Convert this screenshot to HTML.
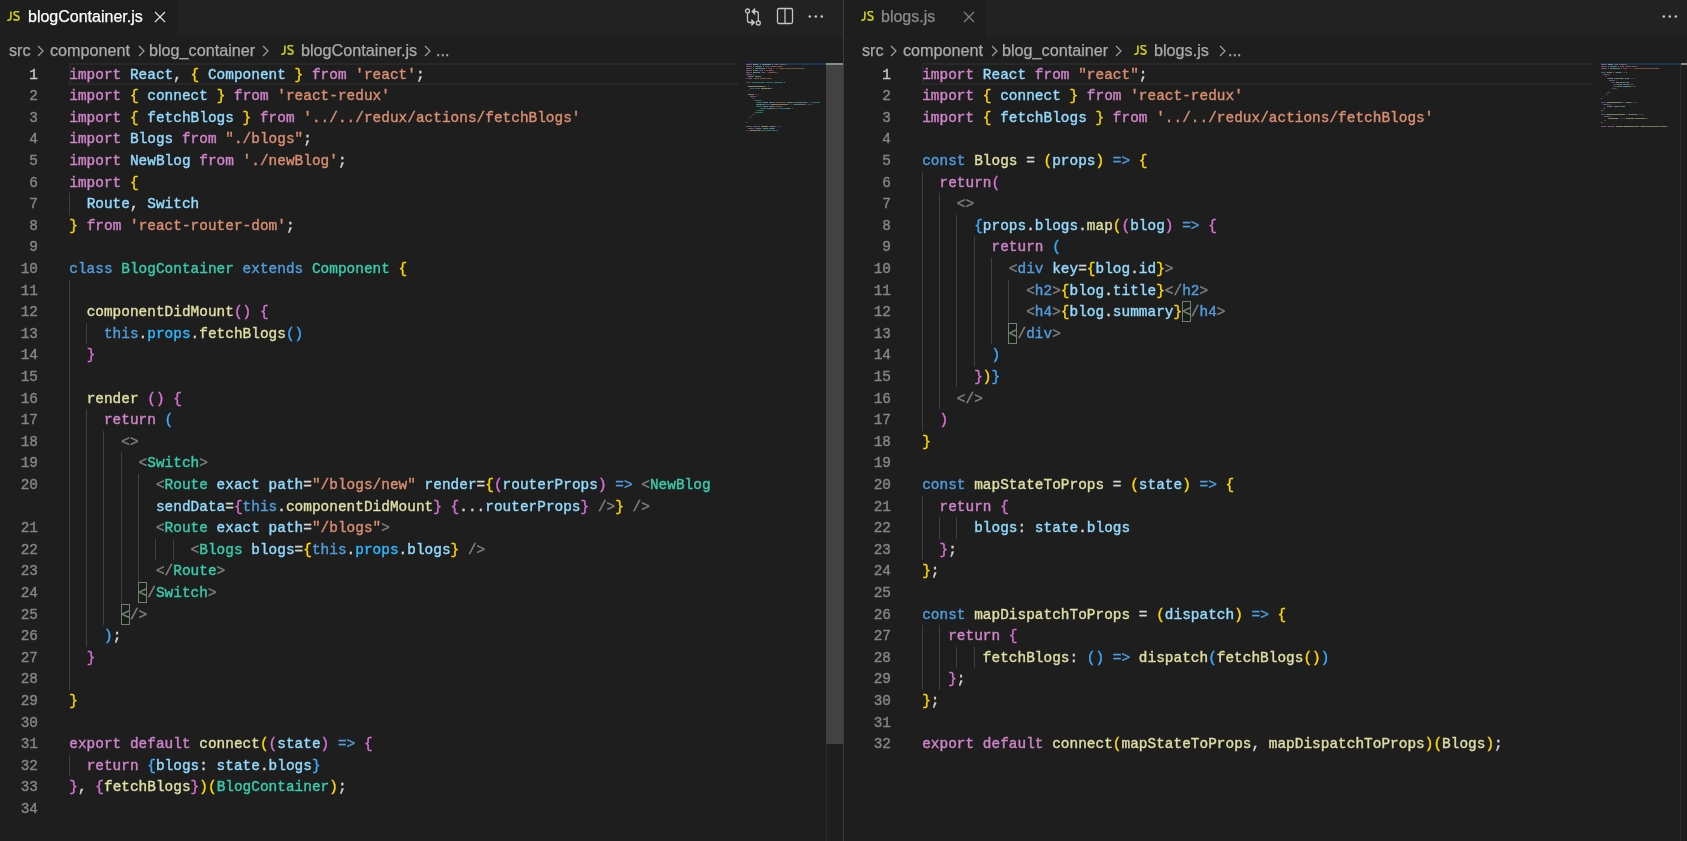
<!DOCTYPE html>
<html><head><meta charset="utf-8">
<style>
html,body{margin:0;padding:0;background:#1e1e1e;width:1687px;height:841px;overflow:hidden;position:relative}
*{box-sizing:border-box}
.pane{position:absolute;top:0;height:841px;background:#1e1e1e;overflow:hidden;will-change:transform}
.tabbar{position:absolute;left:0;top:0;right:0;height:37px;background:#222222}
.tab{position:absolute;top:0;height:37px;background:#1e1e1e}
.tabtxt{position:absolute;top:7px;font:16px "Liberation Sans",sans-serif;white-space:pre;line-height:20px;-webkit-text-stroke:0.25px}
.js{position:absolute;font:bold 12px "Liberation Sans",sans-serif;color:#cbcb41;letter-spacing:-1.3px;line-height:13px}
.crumb{position:absolute;top:40px;font:16.2px "Liberation Sans",sans-serif;color:#ababab;white-space:pre;line-height:20px;-webkit-text-stroke:0.25px}
.code{position:absolute;font:14.4px "Liberation Mono",monospace;-webkit-text-stroke:0.4px;letter-spacing:0.028px}
.ln{position:absolute;left:0;white-space:pre;height:21.6px;line-height:22.2px;color:#d4d4d4}
.num{position:absolute;right:0;width:40px;text-align:right;font:14.4px "Liberation Mono",monospace;line-height:22.4px;color:#858585}
.num.cur{color:#c6c6c6}
.gd{position:absolute;width:1px;background:#404040}
.bx{position:absolute;width:9px;height:21px;border:1px solid #7a7a7a;background:#142014}
.curline{position:absolute;height:21.6px;border:2px solid #282828;border-right:none}
.ck{color:#D084CA}.cb{color:#4F9DDD}.cv{color:#92DBFF}.cc{color:#2DB9FF}.ct{color:#38CCAC}.cr{color:#D98E70}.cf{color:#DFDFA4}.cg{color:#808080}.c1{color:#FFD700}.c2{color:#DA70D6}.c3{color:#3AACFF}.cp{color:#D4D4D4}
.chev{position:absolute;top:45px}
.mm{position:absolute;left:0;top:0;font:1.667px "Liberation Mono",monospace;color:#d4d4d4;opacity:.6;-webkit-text-stroke:0.2px;top:0.5px}
</style></head><body>

<!-- LEFT PANE -->
<div class="pane" style="left:0;width:843px">
  <div class="tabbar"></div>
  <div class="tab" style="left:0;width:177px"></div>
  <svg class="jsi" style="position:absolute;left:7.0px;top:11px" width="14" height="11" viewBox="0 0 14 11" fill="none" stroke="#c9c910" stroke-width="1.7" stroke-linecap="butt"><path d="M3.9 0.5V6.3Q3.9 9.2 1.6 9.2Q0.8 9.2 0.3 8.8"/><path d="M11.9 1.3Q11.1 0.5 9.5 0.5Q7 0.5 7 2.5Q7 3.9 9.3 4.6Q12 5.4 12 7Q12 9.2 9.4 9.2Q7.6 9.2 6.5 8.2"/></svg>
  <div class="tabtxt" style="left:28px;color:#ffffff">blogContainer.js</div>
  <svg style="position:absolute;left:154px;top:11px" width="12" height="12" viewBox="0 0 12 12"><path d="M1 1L11 11M11 1L1 11" stroke="#e0e0e0" stroke-width="1.2"/></svg>
  <!-- actions -->
  <svg style="position:absolute;left:744px;top:7px" width="19" height="19" viewBox="0 0 19 19" fill="none" stroke="#c5c5c5" stroke-width="1.3">
    <circle cx="3.5" cy="4" r="2"/><path d="M3.5 6V13.5a2 2 0 0 0 2 2H9"/><path d="M8 13.2L10.3 15.5L8 17.8Z" fill="#c5c5c5"/>
    <circle cx="14.3" cy="16" r="2"/><path d="M14.3 14V6.5a2 2 0 0 0-2-2H9.5"/><path d="M10.5 2.2L8.2 4.5L10.5 6.8Z" fill="#c5c5c5"/>
  </svg>
  <svg style="position:absolute;left:776px;top:7px" width="18" height="18" viewBox="0 0 18 18" fill="none" stroke="#c5c5c5" stroke-width="1.3">
    <rect x="1.5" y="1.5" width="15" height="15" rx="1.5"/><path d="M9 1.5V16.5"/>
  </svg>
  <svg style="position:absolute;left:806.5px;top:14px" width="18" height="6" viewBox="0 0 18 6" fill="#c5c5c5">
    <circle cx="2.8" cy="2.5" r="1.3"/><circle cx="8.8" cy="2.5" r="1.3"/><circle cx="14.8" cy="2.5" r="1.3"/>
  </svg>
  <!-- breadcrumbs -->
  <div class="crumb" style="left:9px">src</div>
  <svg class="chev" style="left:37px" width="7" height="12" viewBox="0 0 7 12"><path d="M1 1 L6 6 L1 11" fill="none" stroke="#a0a0a0" stroke-width="1.2"/></svg>
  <div class="crumb" style="left:50px">component</div>
  <svg class="chev" style="left:138px" width="7" height="12" viewBox="0 0 7 12"><path d="M1 1 L6 6 L1 11" fill="none" stroke="#a0a0a0" stroke-width="1.2"/></svg>
  <div class="crumb" style="left:149px">blog_container</div>
  <svg class="chev" style="left:262px" width="7" height="12" viewBox="0 0 7 12"><path d="M1 1 L6 6 L1 11" fill="none" stroke="#a0a0a0" stroke-width="1.2"/></svg>
  <svg class="jsi" style="position:absolute;left:281.0px;top:45px" width="14" height="11" viewBox="0 0 14 11" fill="none" stroke="#c9c910" stroke-width="1.7" stroke-linecap="butt"><path d="M3.9 0.5V6.3Q3.9 9.2 1.6 9.2Q0.8 9.2 0.3 8.8"/><path d="M11.9 1.3Q11.1 0.5 9.5 0.5Q7 0.5 7 2.5Q7 3.9 9.3 4.6Q12 5.4 12 7Q12 9.2 9.4 9.2Q7.6 9.2 6.5 8.2"/></svg>
  <div class="crumb" style="left:301px">blogContainer.js</div>
  <svg class="chev" style="left:424px" width="7" height="12" viewBox="0 0 7 12"><path d="M1 1 L6 6 L1 11" fill="none" stroke="#a0a0a0" stroke-width="1.2"/></svg>
  <div class="crumb" style="left:436px">...</div>

  <div class="curline" style="left:69px;top:63.0px;width:669px"></div>
  <div class="code" style="left:-2px;top:63.5px;width:40px;height:760px"><div class="num cur" style="top:0.00px">1</div>
<div class="num" style="top:21.60px">2</div>
<div class="num" style="top:43.20px">3</div>
<div class="num" style="top:64.80px">4</div>
<div class="num" style="top:86.40px">5</div>
<div class="num" style="top:108.00px">6</div>
<div class="num" style="top:129.60px">7</div>
<div class="num" style="top:151.20px">8</div>
<div class="num" style="top:172.80px">9</div>
<div class="num" style="top:194.40px">10</div>
<div class="num" style="top:216.00px">11</div>
<div class="num" style="top:237.60px">12</div>
<div class="num" style="top:259.20px">13</div>
<div class="num" style="top:280.80px">14</div>
<div class="num" style="top:302.40px">15</div>
<div class="num" style="top:324.00px">16</div>
<div class="num" style="top:345.60px">17</div>
<div class="num" style="top:367.20px">18</div>
<div class="num" style="top:388.80px">19</div>
<div class="num" style="top:410.40px">20</div>
<div class="num" style="top:453.60px">21</div>
<div class="num" style="top:475.20px">22</div>
<div class="num" style="top:496.80px">23</div>
<div class="num" style="top:518.40px">24</div>
<div class="num" style="top:540.00px">25</div>
<div class="num" style="top:561.60px">26</div>
<div class="num" style="top:583.20px">27</div>
<div class="num" style="top:604.80px">28</div>
<div class="num" style="top:626.40px">29</div>
<div class="num" style="top:648.00px">30</div>
<div class="num" style="top:669.60px">31</div>
<div class="num" style="top:691.20px">32</div>
<div class="num" style="top:712.80px">33</div>
<div class="num" style="top:734.40px">34</div></div>
  <div class="gd" style="left:69px;top:193.10px;height:21.60px"></div>
<div class="gd" style="left:69px;top:279.50px;height:410.40px"></div>
<div class="gd" style="left:86px;top:322.70px;height:21.60px"></div>
<div class="gd" style="left:86px;top:409.10px;height:237.60px"></div>
<div class="gd" style="left:103px;top:430.70px;height:194.40px"></div>
<div class="gd" style="left:121px;top:452.30px;height:151.20px"></div>
<div class="gd" style="left:138px;top:473.90px;height:108.00px"></div>
<div class="gd" style="left:155px;top:538.70px;height:21.60px"></div>
<div class="gd" style="left:173px;top:538.70px;height:21.60px"></div>
<div class="gd" style="left:69px;top:754.70px;height:21.60px"></div>
  <div class="bx" style="left:138px;top:581.90px"></div>
<div class="bx" style="left:121px;top:603.50px"></div>
  <div class="code" style="left:69.3px;top:63.5px;width:680px;height:780px">
  <div class="ln" style="top:0.00px"><span class="ck">import</span> <span class="cv">React</span>, <span class="c1">{</span> <span class="cv">Component</span> <span class="c1">}</span> <span class="ck">from</span> <span class="cr">&#x27;react&#x27;</span>;</div>
<div class="ln" style="top:21.60px"><span class="ck">import</span> <span class="c1">{</span> <span class="cv">connect</span> <span class="c1">}</span> <span class="ck">from</span> <span class="cr">&#x27;react-redux&#x27;</span></div>
<div class="ln" style="top:43.20px"><span class="ck">import</span> <span class="c1">{</span> <span class="cv">fetchBlogs</span> <span class="c1">}</span> <span class="ck">from</span> <span class="cr">&#x27;../../redux/actions/fetchBlogs&#x27;</span></div>
<div class="ln" style="top:64.80px"><span class="ck">import</span> <span class="cv">Blogs</span> <span class="ck">from</span> <span class="cr">&quot;./blogs&quot;</span>;</div>
<div class="ln" style="top:86.40px"><span class="ck">import</span> <span class="cv">NewBlog</span> <span class="ck">from</span> <span class="cr">&#x27;./newBlog&#x27;</span>;</div>
<div class="ln" style="top:108.00px"><span class="ck">import</span> <span class="c1">{</span></div>
<div class="ln" style="top:129.60px">  <span class="cv">Route</span>, <span class="cv">Switch</span></div>
<div class="ln" style="top:151.20px"><span class="c1">}</span> <span class="ck">from</span> <span class="cr">&#x27;react-router-dom&#x27;</span>;</div>
<div class="ln" style="top:172.80px"></div>
<div class="ln" style="top:194.40px"><span class="cb">class</span> <span class="ct">BlogContainer</span> <span class="cb">extends</span> <span class="ct">Component</span> <span class="c1">{</span></div>
<div class="ln" style="top:216.00px"></div>
<div class="ln" style="top:237.60px">  <span class="cf">componentDidMount</span><span class="c2">()</span> <span class="c2">{</span></div>
<div class="ln" style="top:259.20px">    <span class="cb">this</span>.<span class="cc">props</span>.<span class="cf">fetchBlogs</span><span class="c3">()</span></div>
<div class="ln" style="top:280.80px">  <span class="c2">}</span></div>
<div class="ln" style="top:302.40px"></div>
<div class="ln" style="top:324.00px">  <span class="cf">render</span> <span class="c2">()</span> <span class="c2">{</span></div>
<div class="ln" style="top:345.60px">    <span class="ck">return</span> <span class="c3">(</span></div>
<div class="ln" style="top:367.20px">      <span class="cg">&lt;&gt;</span></div>
<div class="ln" style="top:388.80px">        <span class="cg">&lt;</span><span class="ct">Switch</span><span class="cg">&gt;</span></div>
<div class="ln" style="top:410.40px">          <span class="cg">&lt;</span><span class="ct">Route</span> <span class="cv">exact</span> <span class="cv">path</span>=<span class="cr">&quot;/blogs/new&quot;</span> <span class="cv">render</span>=<span class="c1">{</span><span class="c2">(</span><span class="cv">routerProps</span><span class="c2">)</span> <span class="cb">=&gt;</span> <span class="cg">&lt;</span><span class="ct">NewBlog</span></div>
<div class="ln" style="top:432.00px">          <span class="cv">sendData</span>=<span class="c2">{</span><span class="cb">this</span>.<span class="cf">componentDidMount</span><span class="c2">}</span> <span class="c2">{</span>...<span class="cv">routerProps</span><span class="c2">}</span> <span class="cg">/&gt;</span><span class="c1">}</span> <span class="cg">/&gt;</span></div>
<div class="ln" style="top:453.60px">          <span class="cg">&lt;</span><span class="ct">Route</span> <span class="cv">exact</span> <span class="cv">path</span>=<span class="cr">&quot;/blogs&quot;</span><span class="cg">&gt;</span></div>
<div class="ln" style="top:475.20px">              <span class="cg">&lt;</span><span class="ct">Blogs</span> <span class="cv">blogs</span>=<span class="c1">{</span><span class="cb">this</span>.<span class="cc">props</span>.<span class="cv">blogs</span><span class="c1">}</span> <span class="cg">/&gt;</span></div>
<div class="ln" style="top:496.80px">          <span class="cg">&lt;/</span><span class="ct">Route</span><span class="cg">&gt;</span></div>
<div class="ln" style="top:518.40px">        <span class="cg">&lt;/</span><span class="ct">Switch</span><span class="cg">&gt;</span></div>
<div class="ln" style="top:540.00px">      <span class="cg">&lt;/&gt;</span></div>
<div class="ln" style="top:561.60px">    <span class="c3">)</span>;</div>
<div class="ln" style="top:583.20px">  <span class="c2">}</span></div>
<div class="ln" style="top:604.80px"></div>
<div class="ln" style="top:626.40px"><span class="c1">}</span></div>
<div class="ln" style="top:648.00px"></div>
<div class="ln" style="top:669.60px"><span class="ck">export</span> <span class="ck">default</span> <span class="cf">connect</span><span class="c1">(</span><span class="c2">(</span><span class="cv">state</span><span class="c2">)</span> <span class="cb">=&gt;</span> <span class="c2">{</span></div>
<div class="ln" style="top:691.20px">  <span class="ck">return</span> <span class="c3">{</span><span class="cv">blogs</span>: <span class="cv">state</span>.<span class="cv">blogs</span><span class="c3">}</span></div>
<div class="ln" style="top:712.80px"><span class="c2">}</span>, <span class="c2">{</span><span class="cf">fetchBlogs</span><span class="c2">}</span><span class="c1">)</span><span class="c1">(</span><span class="ct">BlogContainer</span><span class="c1">)</span>;</div>
<div class="ln" style="top:734.40px"></div>
  </div>
  <!-- minimap -->
  <div style="position:absolute;left:746px;top:63px;width:80px;height:2px;background:#1c3552"></div>
  <div style="position:absolute;left:746px;top:63px;width:80px;height:80px"><div class="mm"><div style="position:absolute;left:0;top:0px;height:2px;line-height:2px;white-space:pre"><span class="ck">import</span> <span class="cv">React</span>, <span class="c1">{</span> <span class="cv">Component</span> <span class="c1">}</span> <span class="ck">from</span> <span class="cr">&#x27;react&#x27;</span>;</div><div style="position:absolute;left:0;top:2px;height:2px;line-height:2px;white-space:pre"><span class="ck">import</span> <span class="c1">{</span> <span class="cv">connect</span> <span class="c1">}</span> <span class="ck">from</span> <span class="cr">&#x27;react-redux&#x27;</span></div><div style="position:absolute;left:0;top:4px;height:2px;line-height:2px;white-space:pre"><span class="ck">import</span> <span class="c1">{</span> <span class="cv">fetchBlogs</span> <span class="c1">}</span> <span class="ck">from</span> <span class="cr">&#x27;../../redux/actions/fetchBlogs&#x27;</span></div><div style="position:absolute;left:0;top:6px;height:2px;line-height:2px;white-space:pre"><span class="ck">import</span> <span class="cv">Blogs</span> <span class="ck">from</span> <span class="cr">&quot;./blogs&quot;</span>;</div><div style="position:absolute;left:0;top:8px;height:2px;line-height:2px;white-space:pre"><span class="ck">import</span> <span class="cv">NewBlog</span> <span class="ck">from</span> <span class="cr">&#x27;./newBlog&#x27;</span>;</div><div style="position:absolute;left:0;top:10px;height:2px;line-height:2px;white-space:pre"><span class="ck">import</span> <span class="c1">{</span></div><div style="position:absolute;left:0;top:12px;height:2px;line-height:2px;white-space:pre">  <span class="cv">Route</span>, <span class="cv">Switch</span></div><div style="position:absolute;left:0;top:14px;height:2px;line-height:2px;white-space:pre"><span class="c1">}</span> <span class="ck">from</span> <span class="cr">&#x27;react-router-dom&#x27;</span>;</div><div style="position:absolute;left:0;top:16px;height:2px;line-height:2px;white-space:pre"></div><div style="position:absolute;left:0;top:18px;height:2px;line-height:2px;white-space:pre"><span class="cb">class</span> <span class="ct">BlogContainer</span> <span class="cb">extends</span> <span class="ct">Component</span> <span class="c1">{</span></div><div style="position:absolute;left:0;top:20px;height:2px;line-height:2px;white-space:pre"></div><div style="position:absolute;left:0;top:22px;height:2px;line-height:2px;white-space:pre">  <span class="cf">componentDidMount</span><span class="c2">()</span> <span class="c2">{</span></div><div style="position:absolute;left:0;top:24px;height:2px;line-height:2px;white-space:pre">    <span class="cb">this</span>.<span class="cc">props</span>.<span class="cf">fetchBlogs</span><span class="c3">()</span></div><div style="position:absolute;left:0;top:26px;height:2px;line-height:2px;white-space:pre">  <span class="c2">}</span></div><div style="position:absolute;left:0;top:28px;height:2px;line-height:2px;white-space:pre"></div><div style="position:absolute;left:0;top:30px;height:2px;line-height:2px;white-space:pre">  <span class="cf">render</span> <span class="c2">()</span> <span class="c2">{</span></div><div style="position:absolute;left:0;top:32px;height:2px;line-height:2px;white-space:pre">    <span class="ck">return</span> <span class="c3">(</span></div><div style="position:absolute;left:0;top:34px;height:2px;line-height:2px;white-space:pre">      <span class="cg">&lt;&gt;</span></div><div style="position:absolute;left:0;top:36px;height:2px;line-height:2px;white-space:pre">        <span class="cg">&lt;</span><span class="ct">Switch</span><span class="cg">&gt;</span></div><div style="position:absolute;left:0;top:38px;height:2px;line-height:2px;white-space:pre">          <span class="cg">&lt;</span><span class="ct">Route</span> <span class="cv">exact</span> <span class="cv">path</span>=<span class="cr">&quot;/blogs/new&quot;</span> <span class="cv">render</span>=<span class="c1">{</span><span class="c2">(</span><span class="cv">routerProps</span><span class="c2">)</span> <span class="cb">=&gt;</span> <span class="cg">&lt;</span><span class="ct">NewBlog</span></div><div style="position:absolute;left:0;top:40px;height:2px;line-height:2px;white-space:pre">          <span class="cv">sendData</span>=<span class="c2">{</span><span class="cb">this</span>.<span class="cf">componentDidMount</span><span class="c2">}</span> <span class="c2">{</span>...<span class="cv">routerProps</span><span class="c2">}</span> <span class="cg">/&gt;</span><span class="c1">}</span> <span class="cg">/&gt;</span></div><div style="position:absolute;left:0;top:42px;height:2px;line-height:2px;white-space:pre">          <span class="cg">&lt;</span><span class="ct">Route</span> <span class="cv">exact</span> <span class="cv">path</span>=<span class="cr">&quot;/blogs&quot;</span><span class="cg">&gt;</span></div><div style="position:absolute;left:0;top:44px;height:2px;line-height:2px;white-space:pre">              <span class="cg">&lt;</span><span class="ct">Blogs</span> <span class="cv">blogs</span>=<span class="c1">{</span><span class="cb">this</span>.<span class="cc">props</span>.<span class="cv">blogs</span><span class="c1">}</span> <span class="cg">/&gt;</span></div><div style="position:absolute;left:0;top:46px;height:2px;line-height:2px;white-space:pre">          <span class="cg">&lt;/</span><span class="ct">Route</span><span class="cg">&gt;</span></div><div style="position:absolute;left:0;top:48px;height:2px;line-height:2px;white-space:pre">        <span class="cg">&lt;/</span><span class="ct">Switch</span><span class="cg">&gt;</span></div><div style="position:absolute;left:0;top:50px;height:2px;line-height:2px;white-space:pre">      <span class="cg">&lt;/&gt;</span></div><div style="position:absolute;left:0;top:52px;height:2px;line-height:2px;white-space:pre">    <span class="c3">)</span>;</div><div style="position:absolute;left:0;top:54px;height:2px;line-height:2px;white-space:pre">  <span class="c2">}</span></div><div style="position:absolute;left:0;top:56px;height:2px;line-height:2px;white-space:pre"></div><div style="position:absolute;left:0;top:58px;height:2px;line-height:2px;white-space:pre"><span class="c1">}</span></div><div style="position:absolute;left:0;top:60px;height:2px;line-height:2px;white-space:pre"></div><div style="position:absolute;left:0;top:62px;height:2px;line-height:2px;white-space:pre"><span class="ck">export</span> <span class="ck">default</span> <span class="cf">connect</span><span class="c1">(</span><span class="c2">(</span><span class="cv">state</span><span class="c2">)</span> <span class="cb">=&gt;</span> <span class="c2">{</span></div><div style="position:absolute;left:0;top:64px;height:2px;line-height:2px;white-space:pre">  <span class="ck">return</span> <span class="c3">{</span><span class="cv">blogs</span>: <span class="cv">state</span>.<span class="cv">blogs</span><span class="c3">}</span></div><div style="position:absolute;left:0;top:66px;height:2px;line-height:2px;white-space:pre"><span class="c2">}</span>, <span class="c2">{</span><span class="cf">fetchBlogs</span><span class="c2">}</span><span class="c1">)</span><span class="c1">(</span><span class="ct">BlogContainer</span><span class="c1">)</span>;</div><div style="position:absolute;left:0;top:68px;height:2px;line-height:2px;white-space:pre"></div></div></div>
  <!-- scrollbar -->
  <div style="position:absolute;left:826px;top:63px;width:1px;height:778px;background:#2b2b2b"></div>
  <div style="position:absolute;left:826px;top:63px;width:17px;height:681px;background:#424242"></div>
  <div style="position:absolute;left:826px;top:63px;width:17px;height:2px;background:#8c8c8c"></div>
</div>
<div style="position:absolute;left:843px;top:0;width:1px;height:841px;background:#3c3c3c"></div>

<!-- RIGHT PANE -->
<div class="pane" style="left:844px;width:843px">
  <div class="tabbar"></div>
  <div class="tab" style="left:0;width:142px"></div>
  <svg class="jsi" style="position:absolute;left:16.5px;top:11px" width="14" height="11" viewBox="0 0 14 11" fill="none" stroke="#c9c910" stroke-width="1.7" stroke-linecap="butt"><path d="M3.9 0.5V6.3Q3.9 9.2 1.6 9.2Q0.8 9.2 0.3 8.8"/><path d="M11.9 1.3Q11.1 0.5 9.5 0.5Q7 0.5 7 2.5Q7 3.9 9.3 4.6Q12 5.4 12 7Q12 9.2 9.4 9.2Q7.6 9.2 6.5 8.2"/></svg>
  <div class="tabtxt" style="left:37px;color:#8b8b8b">blogs.js</div>
  <svg style="position:absolute;left:119px;top:11px" width="12" height="12" viewBox="0 0 12 12"><path d="M1 1L11 11M11 1L1 11" stroke="#808080" stroke-width="1.2"/></svg>
  <svg style="position:absolute;left:816.5px;top:14px" width="18" height="6" viewBox="0 0 18 6" fill="#c5c5c5">
    <circle cx="2.8" cy="2.5" r="1.3"/><circle cx="8.8" cy="2.5" r="1.3"/><circle cx="14.8" cy="2.5" r="1.3"/>
  </svg>
  <div class="crumb" style="left:18px">src</div>
  <svg class="chev" style="left:46px" width="7" height="12" viewBox="0 0 7 12"><path d="M1 1 L6 6 L1 11" fill="none" stroke="#a0a0a0" stroke-width="1.2"/></svg>
  <div class="crumb" style="left:59px">component</div>
  <svg class="chev" style="left:147px" width="7" height="12" viewBox="0 0 7 12"><path d="M1 1 L6 6 L1 11" fill="none" stroke="#a0a0a0" stroke-width="1.2"/></svg>
  <div class="crumb" style="left:158px">blog_container</div>
  <svg class="chev" style="left:271px" width="7" height="12" viewBox="0 0 7 12"><path d="M1 1 L6 6 L1 11" fill="none" stroke="#a0a0a0" stroke-width="1.2"/></svg>
  <svg class="jsi" style="position:absolute;left:290.0px;top:45px" width="14" height="11" viewBox="0 0 14 11" fill="none" stroke="#c9c910" stroke-width="1.7" stroke-linecap="butt"><path d="M3.9 0.5V6.3Q3.9 9.2 1.6 9.2Q0.8 9.2 0.3 8.8"/><path d="M11.9 1.3Q11.1 0.5 9.5 0.5Q7 0.5 7 2.5Q7 3.9 9.3 4.6Q12 5.4 12 7Q12 9.2 9.4 9.2Q7.6 9.2 6.5 8.2"/></svg>
  <div class="crumb" style="left:310px">blogs.js</div>
  <svg class="chev" style="left:375px" width="7" height="12" viewBox="0 0 7 12"><path d="M1 1 L6 6 L1 11" fill="none" stroke="#a0a0a0" stroke-width="1.2"/></svg>
  <div class="crumb" style="left:384px">...</div>

  <div class="curline" style="left:78px;top:63.0px;width:671px"></div>
  <div class="code" style="left:7px;top:63.5px;width:40px;height:760px"><div class="num cur" style="top:0.00px">1</div>
<div class="num" style="top:21.60px">2</div>
<div class="num" style="top:43.20px">3</div>
<div class="num" style="top:64.80px">4</div>
<div class="num" style="top:86.40px">5</div>
<div class="num" style="top:108.00px">6</div>
<div class="num" style="top:129.60px">7</div>
<div class="num" style="top:151.20px">8</div>
<div class="num" style="top:172.80px">9</div>
<div class="num" style="top:194.40px">10</div>
<div class="num" style="top:216.00px">11</div>
<div class="num" style="top:237.60px">12</div>
<div class="num" style="top:259.20px">13</div>
<div class="num" style="top:280.80px">14</div>
<div class="num" style="top:302.40px">15</div>
<div class="num" style="top:324.00px">16</div>
<div class="num" style="top:345.60px">17</div>
<div class="num" style="top:367.20px">18</div>
<div class="num" style="top:388.80px">19</div>
<div class="num" style="top:410.40px">20</div>
<div class="num" style="top:432.00px">21</div>
<div class="num" style="top:453.60px">22</div>
<div class="num" style="top:475.20px">23</div>
<div class="num" style="top:496.80px">24</div>
<div class="num" style="top:518.40px">25</div>
<div class="num" style="top:540.00px">26</div>
<div class="num" style="top:561.60px">27</div>
<div class="num" style="top:583.20px">28</div>
<div class="num" style="top:604.80px">29</div>
<div class="num" style="top:626.40px">30</div>
<div class="num" style="top:648.00px">31</div>
<div class="num" style="top:669.60px">32</div></div>
  <div class="gd" style="left:78px;top:171.50px;height:259.20px"></div>
<div class="gd" style="left:95px;top:193.10px;height:216.00px"></div>
<div class="gd" style="left:112px;top:214.70px;height:172.80px"></div>
<div class="gd" style="left:130px;top:236.30px;height:129.60px"></div>
<div class="gd" style="left:147px;top:257.90px;height:86.40px"></div>
<div class="gd" style="left:164px;top:279.50px;height:43.20px"></div>
<div class="gd" style="left:78px;top:495.50px;height:64.80px"></div>
<div class="gd" style="left:95px;top:517.10px;height:21.60px"></div>
<div class="gd" style="left:112px;top:517.10px;height:21.60px"></div>
<div class="gd" style="left:78px;top:625.10px;height:64.80px"></div>
<div class="gd" style="left:95px;top:625.10px;height:64.80px"></div>
<div class="gd" style="left:95px;top:646.70px;height:21.60px"></div>
<div class="gd" style="left:112px;top:646.70px;height:21.60px"></div>
<div class="gd" style="left:130px;top:646.70px;height:21.60px"></div>
  <div class="bx" style="left:338px;top:301.10px"></div>
<div class="bx" style="left:164px;top:322.70px"></div>
  <div class="code" style="left:78.2px;top:63.5px;width:680px;height:780px">
  <div class="ln" style="top:0.00px"><span class="ck">import</span> <span class="cv">React</span> <span class="ck">from</span> <span class="cr">&quot;react&quot;</span>;</div>
<div class="ln" style="top:21.60px"><span class="ck">import</span> <span class="c1">{</span> <span class="cv">connect</span> <span class="c1">}</span> <span class="ck">from</span> <span class="cr">&#x27;react-redux&#x27;</span></div>
<div class="ln" style="top:43.20px"><span class="ck">import</span> <span class="c1">{</span> <span class="cv">fetchBlogs</span> <span class="c1">}</span> <span class="ck">from</span> <span class="cr">&#x27;../../redux/actions/fetchBlogs&#x27;</span></div>
<div class="ln" style="top:64.80px"></div>
<div class="ln" style="top:86.40px"><span class="cb">const</span> <span class="cf">Blogs</span> = <span class="c1">(</span><span class="cv">props</span><span class="c1">)</span> <span class="cb">=&gt;</span> <span class="c1">{</span></div>
<div class="ln" style="top:108.00px">  <span class="ck">return</span><span class="c2">(</span></div>
<div class="ln" style="top:129.60px">    <span class="cg">&lt;&gt;</span></div>
<div class="ln" style="top:151.20px">      <span class="c3">{</span><span class="cv">props</span>.<span class="cv">blogs</span>.<span class="cf">map</span><span class="c1">(</span><span class="c2">(</span><span class="cv">blog</span><span class="c2">)</span> <span class="cb">=&gt;</span> <span class="c2">{</span></div>
<div class="ln" style="top:172.80px">        <span class="ck">return</span> <span class="c3">(</span></div>
<div class="ln" style="top:194.40px">          <span class="cg">&lt;</span><span class="cb">div</span> <span class="cv">key</span>=<span class="c1">{</span><span class="cv">blog</span>.<span class="cv">id</span><span class="c1">}</span><span class="cg">&gt;</span></div>
<div class="ln" style="top:216.00px">            <span class="cg">&lt;</span><span class="cb">h2</span><span class="cg">&gt;</span><span class="c1">{</span><span class="cv">blog</span>.<span class="cv">title</span><span class="c1">}</span><span class="cg">&lt;/</span><span class="cb">h2</span><span class="cg">&gt;</span></div>
<div class="ln" style="top:237.60px">            <span class="cg">&lt;</span><span class="cb">h4</span><span class="cg">&gt;</span><span class="c1">{</span><span class="cv">blog</span>.<span class="cv">summary</span><span class="c1">}</span><span class="cg">&lt;/</span><span class="cb">h4</span><span class="cg">&gt;</span></div>
<div class="ln" style="top:259.20px">          <span class="cg">&lt;/</span><span class="cb">div</span><span class="cg">&gt;</span></div>
<div class="ln" style="top:280.80px">        <span class="c3">)</span></div>
<div class="ln" style="top:302.40px">      <span class="c2">}</span><span class="c1">)</span><span class="c3">}</span></div>
<div class="ln" style="top:324.00px">    <span class="cg">&lt;/&gt;</span></div>
<div class="ln" style="top:345.60px">  <span class="c2">)</span></div>
<div class="ln" style="top:367.20px"><span class="c1">}</span></div>
<div class="ln" style="top:388.80px"></div>
<div class="ln" style="top:410.40px"><span class="cb">const</span> <span class="cf">mapStateToProps</span> = <span class="c1">(</span><span class="cv">state</span><span class="c1">)</span> <span class="cb">=&gt;</span> <span class="c1">{</span></div>
<div class="ln" style="top:432.00px">  <span class="ck">return</span> <span class="c2">{</span></div>
<div class="ln" style="top:453.60px">      <span class="cv">blogs</span>: <span class="cv">state</span>.<span class="cv">blogs</span></div>
<div class="ln" style="top:475.20px">  <span class="c2">}</span>;</div>
<div class="ln" style="top:496.80px"><span class="c1">}</span>;</div>
<div class="ln" style="top:518.40px"></div>
<div class="ln" style="top:540.00px"><span class="cb">const</span> <span class="cf">mapDispatchToProps</span> = <span class="c1">(</span><span class="cv">dispatch</span><span class="c1">)</span> <span class="cb">=&gt;</span> <span class="c1">{</span></div>
<div class="ln" style="top:561.60px">   <span class="ck">return</span> <span class="c2">{</span></div>
<div class="ln" style="top:583.20px">       <span class="cf">fetchBlogs</span>: <span class="c3">()</span> <span class="cb">=&gt;</span> <span class="cf">dispatch</span><span class="c3">(</span><span class="cf">fetchBlogs</span><span class="c1">()</span><span class="c3">)</span></div>
<div class="ln" style="top:604.80px">   <span class="c2">}</span>;</div>
<div class="ln" style="top:626.40px"><span class="c1">}</span>;</div>
<div class="ln" style="top:648.00px"></div>
<div class="ln" style="top:669.60px"><span class="ck">export</span> <span class="ck">default</span> <span class="cf">connect</span><span class="c1">(</span><span class="cf">mapStateToProps</span>, <span class="cf">mapDispatchToProps</span><span class="c1">)</span><span class="c1">(</span><span class="cf">Blogs</span><span class="c1">)</span>;</div>
  </div>
  <div style="position:absolute;left:757px;top:63px;width:80px;height:2px;background:#1c3552"></div>
  <div style="position:absolute;left:757px;top:63px;width:80px;height:80px"><div class="mm"><div style="position:absolute;left:0;top:0px;height:2px;line-height:2px;white-space:pre"><span class="ck">import</span> <span class="cv">React</span> <span class="ck">from</span> <span class="cr">&quot;react&quot;</span>;</div><div style="position:absolute;left:0;top:2px;height:2px;line-height:2px;white-space:pre"><span class="ck">import</span> <span class="c1">{</span> <span class="cv">connect</span> <span class="c1">}</span> <span class="ck">from</span> <span class="cr">&#x27;react-redux&#x27;</span></div><div style="position:absolute;left:0;top:4px;height:2px;line-height:2px;white-space:pre"><span class="ck">import</span> <span class="c1">{</span> <span class="cv">fetchBlogs</span> <span class="c1">}</span> <span class="ck">from</span> <span class="cr">&#x27;../../redux/actions/fetchBlogs&#x27;</span></div><div style="position:absolute;left:0;top:6px;height:2px;line-height:2px;white-space:pre"></div><div style="position:absolute;left:0;top:8px;height:2px;line-height:2px;white-space:pre"><span class="cb">const</span> <span class="cf">Blogs</span> = <span class="c1">(</span><span class="cv">props</span><span class="c1">)</span> <span class="cb">=&gt;</span> <span class="c1">{</span></div><div style="position:absolute;left:0;top:10px;height:2px;line-height:2px;white-space:pre">  <span class="ck">return</span><span class="c2">(</span></div><div style="position:absolute;left:0;top:12px;height:2px;line-height:2px;white-space:pre">    <span class="cg">&lt;&gt;</span></div><div style="position:absolute;left:0;top:14px;height:2px;line-height:2px;white-space:pre">      <span class="c3">{</span><span class="cv">props</span>.<span class="cv">blogs</span>.<span class="cf">map</span><span class="c1">(</span><span class="c2">(</span><span class="cv">blog</span><span class="c2">)</span> <span class="cb">=&gt;</span> <span class="c2">{</span></div><div style="position:absolute;left:0;top:16px;height:2px;line-height:2px;white-space:pre">        <span class="ck">return</span> <span class="c3">(</span></div><div style="position:absolute;left:0;top:18px;height:2px;line-height:2px;white-space:pre">          <span class="cg">&lt;</span><span class="cb">div</span> <span class="cv">key</span>=<span class="c1">{</span><span class="cv">blog</span>.<span class="cv">id</span><span class="c1">}</span><span class="cg">&gt;</span></div><div style="position:absolute;left:0;top:20px;height:2px;line-height:2px;white-space:pre">            <span class="cg">&lt;</span><span class="cb">h2</span><span class="cg">&gt;</span><span class="c1">{</span><span class="cv">blog</span>.<span class="cv">title</span><span class="c1">}</span><span class="cg">&lt;/</span><span class="cb">h2</span><span class="cg">&gt;</span></div><div style="position:absolute;left:0;top:22px;height:2px;line-height:2px;white-space:pre">            <span class="cg">&lt;</span><span class="cb">h4</span><span class="cg">&gt;</span><span class="c1">{</span><span class="cv">blog</span>.<span class="cv">summary</span><span class="c1">}</span><span class="cg">&lt;/</span><span class="cb">h4</span><span class="cg">&gt;</span></div><div style="position:absolute;left:0;top:24px;height:2px;line-height:2px;white-space:pre">          <span class="cg">&lt;/</span><span class="cb">div</span><span class="cg">&gt;</span></div><div style="position:absolute;left:0;top:26px;height:2px;line-height:2px;white-space:pre">        <span class="c3">)</span></div><div style="position:absolute;left:0;top:28px;height:2px;line-height:2px;white-space:pre">      <span class="c2">}</span><span class="c1">)</span><span class="c3">}</span></div><div style="position:absolute;left:0;top:30px;height:2px;line-height:2px;white-space:pre">    <span class="cg">&lt;/&gt;</span></div><div style="position:absolute;left:0;top:32px;height:2px;line-height:2px;white-space:pre">  <span class="c2">)</span></div><div style="position:absolute;left:0;top:34px;height:2px;line-height:2px;white-space:pre"><span class="c1">}</span></div><div style="position:absolute;left:0;top:36px;height:2px;line-height:2px;white-space:pre"></div><div style="position:absolute;left:0;top:38px;height:2px;line-height:2px;white-space:pre"><span class="cb">const</span> <span class="cf">mapStateToProps</span> = <span class="c1">(</span><span class="cv">state</span><span class="c1">)</span> <span class="cb">=&gt;</span> <span class="c1">{</span></div><div style="position:absolute;left:0;top:40px;height:2px;line-height:2px;white-space:pre">  <span class="ck">return</span> <span class="c2">{</span></div><div style="position:absolute;left:0;top:42px;height:2px;line-height:2px;white-space:pre">      <span class="cv">blogs</span>: <span class="cv">state</span>.<span class="cv">blogs</span></div><div style="position:absolute;left:0;top:44px;height:2px;line-height:2px;white-space:pre">  <span class="c2">}</span>;</div><div style="position:absolute;left:0;top:46px;height:2px;line-height:2px;white-space:pre"><span class="c1">}</span>;</div><div style="position:absolute;left:0;top:48px;height:2px;line-height:2px;white-space:pre"></div><div style="position:absolute;left:0;top:50px;height:2px;line-height:2px;white-space:pre"><span class="cb">const</span> <span class="cf">mapDispatchToProps</span> = <span class="c1">(</span><span class="cv">dispatch</span><span class="c1">)</span> <span class="cb">=&gt;</span> <span class="c1">{</span></div><div style="position:absolute;left:0;top:52px;height:2px;line-height:2px;white-space:pre">   <span class="ck">return</span> <span class="c2">{</span></div><div style="position:absolute;left:0;top:54px;height:2px;line-height:2px;white-space:pre">       <span class="cf">fetchBlogs</span>: <span class="c3">()</span> <span class="cb">=&gt;</span> <span class="cf">dispatch</span><span class="c3">(</span><span class="cf">fetchBlogs</span><span class="c1">()</span><span class="c3">)</span></div><div style="position:absolute;left:0;top:56px;height:2px;line-height:2px;white-space:pre">   <span class="c2">}</span>;</div><div style="position:absolute;left:0;top:58px;height:2px;line-height:2px;white-space:pre"><span class="c1">}</span>;</div><div style="position:absolute;left:0;top:60px;height:2px;line-height:2px;white-space:pre"></div><div style="position:absolute;left:0;top:62px;height:2px;line-height:2px;white-space:pre"><span class="ck">export</span> <span class="ck">default</span> <span class="cf">connect</span><span class="c1">(</span><span class="cf">mapStateToProps</span>, <span class="cf">mapDispatchToProps</span><span class="c1">)</span><span class="c1">(</span><span class="cf">Blogs</span><span class="c1">)</span>;</div></div></div>
  <div style="position:absolute;left:836px;top:63px;width:1px;height:778px;background:#2b2b2b"></div>
  <div style="position:absolute;left:837px;top:63px;width:6px;height:2px;background:#8c8c8c"></div>
</div>
</body></html>
